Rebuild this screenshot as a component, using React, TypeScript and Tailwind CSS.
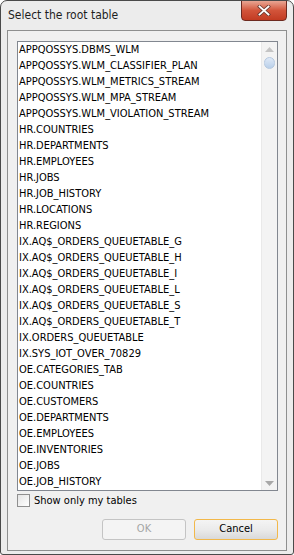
import React from "react";

const items = [
  "APPQOSSYS.DBMS_WLM",
  "APPQOSSYS.WLM_CLASSIFIER_PLAN",
  "APPQOSSYS.WLM_METRICS_STREAM",
  "APPQOSSYS.WLM_MPA_STREAM",
  "APPQOSSYS.WLM_VIOLATION_STREAM",
  "HR.COUNTRIES",
  "HR.DEPARTMENTS",
  "HR.EMPLOYEES",
  "HR.JOBS",
  "HR.JOB_HISTORY",
  "HR.LOCATIONS",
  "HR.REGIONS",
  "IX.AQ$_ORDERS_QUEUETABLE_G",
  "IX.AQ$_ORDERS_QUEUETABLE_H",
  "IX.AQ$_ORDERS_QUEUETABLE_I",
  "IX.AQ$_ORDERS_QUEUETABLE_L",
  "IX.AQ$_ORDERS_QUEUETABLE_S",
  "IX.AQ$_ORDERS_QUEUETABLE_T",
  "IX.ORDERS_QUEUETABLE",
  "IX.SYS_IOT_OVER_70829",
  "OE.CATEGORIES_TAB",
  "OE.COUNTRIES",
  "OE.CUSTOMERS",
  "OE.DEPARTMENTS",
  "OE.EMPLOYEES",
  "OE.INVENTORIES",
  "OE.JOBS",
  "OE.JOB_HISTORY",
];

const font = { fontFamily: '"DejaVu Sans Condensed", "Liberation Sans", sans-serif' };

export default function App() {
  return (
    <div className="w-[294px] h-[555px] bg-white" style={font}>
      <div className="w-[294px] h-[555px] border border-[#4a4a4a] rounded-t-[7px] rounded-b-[3px] bg-[#ececec] flex flex-col relative overflow-hidden">
        {/* title bar */}
        <div className="h-[29px] shrink-0 flex items-center pl-[7px] pb-[1px] text-[12px] text-[#1e1e1e]">
          Select the root table
        </div>
        {/* close button */}
        <div className="absolute top-[-1px] right-[6px] w-[46px] h-[21px] rounded-b-[4px] border border-[#6d2a20] bg-gradient-to-b from-[#e8a593] via-[#d2543a] to-[#c23b22] flex items-center justify-center">
          <svg width="14" height="11" viewBox="0 0 14 11">
            <path d="M2.5 1.5 L11.5 9.5 M11.5 1.5 L2.5 9.5" stroke="#6a3a32" strokeWidth="3.4" strokeLinecap="square" />
            <path d="M2.5 1.5 L11.5 9.5 M11.5 1.5 L2.5 9.5" stroke="#ffffff" strokeWidth="1.8" strokeLinecap="square" />
          </svg>
        </div>
        {/* frame */}
        <div className="flex-1 flex px-[6px] pb-[3px]">
          <div className="flex-1 border border-[#8e8f8f] bg-[#f0f0f0] flex flex-col pt-[10px] pl-[9px] pr-[8px] pb-[10px]">
            {/* listbox */}
            <div className="h-[450px] shrink-0 border border-[#828790] bg-white flex overflow-hidden">
              <div className="flex-1 overflow-hidden pl-[1px]">
                {items.map((t) => (
                  <div key={t} className="h-[16px] leading-[16px] text-[11px] text-black whitespace-nowrap">
                    {t}
                  </div>
                ))}
              </div>
              <div className="w-[16px] shrink-0 bg-[#f3f3f3] border-l border-[#e9e9e9] flex flex-col items-center relative">
                <svg className="mt-[5px]" width="9" height="5" viewBox="0 0 9 5">
                  <path d="M0 5 L4.5 0 L9 5 Z" fill="#c4c4c4" />
                </svg>
                <div className="mt-[5px] w-[11px] h-[12px] rounded-[6px] bg-gradient-to-b from-[#dfe9f6] to-[#b9d0ea] border border-[#b4c8e0]" />
                <div className="flex-1" />
                <svg className="mb-[4px]" width="9" height="5" viewBox="0 0 9 5">
                  <path d="M0 0 L4.5 5 L9 0 Z" fill="#a8a8a8" />
                </svg>
              </div>
            </div>
            {/* checkbox */}
            <div className="mt-[3px] h-[13px] flex items-center gap-[4px]">
              <div className="w-[13px] h-[13px] shrink-0 border border-[#8f8f8f] bg-gradient-to-br from-[#e4e4e4] to-[#ffffff]" />
              <span className="text-[11px] leading-[13px] text-black">Show only my tables</span>
            </div>
            <div className="flex-1" />
            {/* buttons */}
            <div className="flex justify-end gap-[8px]">
              <div className="w-[84px] h-[21px] rounded-[3px] border border-[#c4c4c4] bg-[#f4f4f4] flex items-center justify-center text-[11px] text-[#a5a5a5]">
                OK
              </div>
              <div className="w-[84px] h-[21px] rounded-[3px] border border-[#f2b84a] bg-gradient-to-b from-[#f4f4f4] via-[#ebebeb] to-[#d9d9d9] flex items-center justify-center text-[11px] text-black">
                Cancel
              </div>
            </div>
          </div>
        </div>
      </div>
    </div>
  );
}
